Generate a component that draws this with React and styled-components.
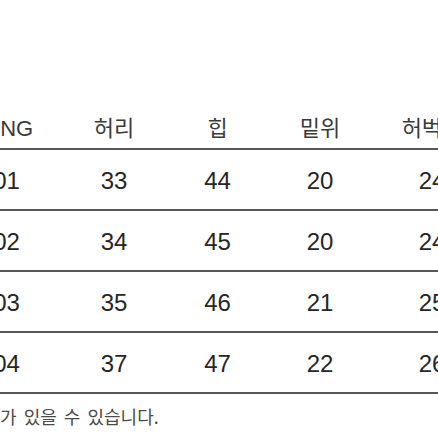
import React from "react";
import styled, { createGlobalStyle } from "styled-components";

const Global = createGlobalStyle`
  html, body { margin: 0; padding: 0; background: #fff; }
  body { width: 438px; height: 438px; overflow: hidden; }
`;

const Page = styled.div`
  width: 438px;
  height: 438px;
  overflow: hidden;
  background: #ffffff;
  padding-top: 108px;
  box-sizing: border-box;
  font-family: "Liberation Sans", "Noto Sans CJK KR", sans-serif;
`;

const Table = styled.div`
  margin-left: -69px;
  width: 800px;
  display: flex;
  flex-direction: column;
`;

const Row = styled.div`
  display: grid;
  grid-template-columns: 131px 104px 103px 102px 122px 110px 110px;
  height: ${(p) => (p.$head ? "40px" : "59px")};
  border-bottom: 2px solid #575757;
  align-items: center;
`;

const Cell = styled.div`
  text-align: center;
  white-space: nowrap;
  font-size: ${(p) => (p.$head ? "22px" : "24px")};
  color: ${(p) => (p.$head ? "#3a3a3a" : "#262626")};
  padding-top: ${(p) => (p.$head ? "1px" : "3px")};
  line-height: 1;
`;

const Note = styled.div`
  margin-top: 12px;
  margin-left: -33px;
  font-family: "Noto Sans CJK KR", sans-serif;
  font-size: 18px;
  word-spacing: 3px;
  line-height: 20px;
  color: #4a4a4a;
  white-space: nowrap;
`;

const head = ["SIZING", "허리", "힙", "밑위", "허벅지", "밑단", "총장"];
const rows = [
  ["M01", "33", "44", "20", "24", "17", "98"],
  ["M02", "34", "45", "20", "24", "17", "99"],
  ["M03", "35", "46", "21", "25", "18", "100"],
  ["M04", "37", "47", "22", "26", "18", "101"],
];

export default function App() {
  return (
    <>
      <Global />
      <Page>
        <Table>
          <Row $head>
            {head.map((h) => (
              <Cell $head key={h}>{h}</Cell>
            ))}
          </Row>
          {rows.map((r) => (
            <Row key={r[0]}>
              {r.map((v, i) => (
                <Cell key={i}>{v}</Cell>
              ))}
            </Row>
          ))}
        </Table>
        <Note>오차가 있을 수 있습니다.</Note>
      </Page>
    </>
  );
}
